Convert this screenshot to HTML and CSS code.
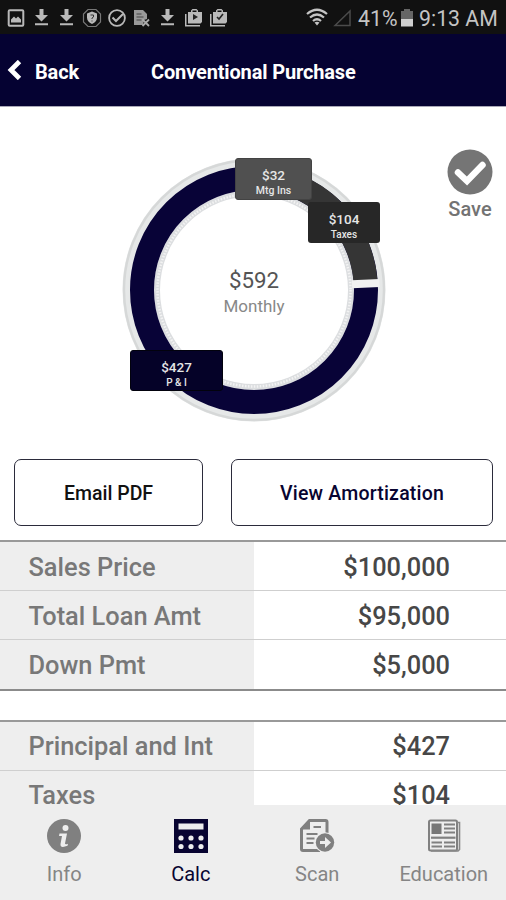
FILE: index.html
```html
<!DOCTYPE html>
<html lang="en">
<head>
<meta charset="utf-8">
<title>Conventional Purchase</title>
<link rel="stylesheet" href="styles.css">
</head>
<body>
<div class="app">
  <div class="status">
    <svg class="status-icons" width="232" height="34" viewBox="0 0 232 34">
      <defs>
        <g id="download"><path d="M4 0h4v6h4.500L6 12.500-.5 6H4zM-.5 14.300h13v2h-13z"/></g>
        <path id="bag" d="M3 3h3V1.500L7.500 0h4L13 1.500V3h4v10l-1.500 1.500H3zM7.500 3h4V1.500h-4zM0 5h1.500v11H15v1.500H0z" fill-rule="evenodd"/>
      </defs>
      <g fill="#b9b9b9">
        <rect x="8.700" y="10.200" width="14.600" height="15.600" rx="1" fill="none" stroke="#b9b9b9" stroke-width="2"/>
        <path d="M11 22.500v-3l3-3 2 2 2-2 3 3v3z"/>
        <use href="#download" x="35.500" y="9"/>
        <use href="#download" x="60.500" y="9"/>
        <path d="M88 9.500h8l4.500 4.500v8l-4.500 4.500h-8L83.500 22v-8z" fill="none" stroke="#777" stroke-width="1.200"/>
        <path d="M92 11.500l5 2v4q0 4-5 6.500-5-2.500-5-6.500v-4z"/>
        <path d="M90.500 15h3v2l-1.500 1v1M92 20.500v1" stroke="#333" fill="none"/>
        <circle cx="117" cy="18" r="7.900" fill="none" stroke="#b9b9b9" stroke-width="1.800"/>
        <path d="M112.500 17.500l3.500 3.500 7-7" fill="none" stroke="#b9b9b9" stroke-width="2"/>
        <path d="M134 10h9l4 4v5l-3 1-1 5h-9z" fill="#999"/>
        <path d="M136.500 14h5M136.500 17h7M136.500 20h5" stroke="#444" stroke-width="1.200"/>
        <path d="M142.500 19.500l6.500 6.500M149 19.500l-6.500 6.500" stroke="#aaa" stroke-width="1.800"/>
        <use href="#download" x="161.500" y="9"/>
        <use href="#bag" x="185" y="9"/>
        <path d="M193 14v6l5-3z" fill="#222"/>
        <use href="#bag" x="210" y="9"/>
        <path d="M217 17l2 2 4-5" stroke="#222" stroke-width="1.600" fill="none"/>
      </g>
    </svg>
    <div class="status-right">
      <svg width="46" height="34" viewBox="0 0 46 34">
        <g fill="none" stroke="#c4c4c4" stroke-width="2.200">
          <path d="M1 14Q11 5.500 21 14M4 17.500Q11 11.500 18 17.500M7 21Q11 17.500 15 21"/>
        </g>
        <path d="M11 25.500L8.500 22.500Q11 21 13.500 22.500z" fill="#c4c4c4"/>
        <path d="M29 25.500L44 11v14.500z" fill="none" stroke="#4b4b4b" stroke-width="1.500"/>
      </svg>
      <span class="pct">41%</span>
      <svg width="12" height="34" viewBox="0 0 12 34"><path d="M0 11h3V9h6v2h3v9H0z" fill="#666"/><path d="M0 19h12v7.500H0z" fill="#d0d0d0"/></svg>
      <span class="clock">9:13 AM</span>
    </div>
  </div>
  <header class="header">
    <div class="back">
      <svg width="15" height="20" viewBox="0 0 15 20"><path d="M12.500 1.500L4 10l8.500 8.500" fill="none" stroke="#fff" stroke-width="4.800"/></svg>
      <span>Back</span>
    </div>
    <h1>Conventional Purchase</h1>
  </header>
  <main class="content">
    <section class="summary">
      <div class="chart">
        <svg width="264" height="264" viewBox="-132 -132 264 264">
          <circle r="127.500" fill="none" stroke="#e6e8e8" stroke-width="8"/>
          <circle r="130" fill="none" stroke="#d6d8d8" stroke-width="2.400"/>
          <circle r="97" fill="none" stroke="#dcdee0" stroke-width="6"/>
          <circle r="96.500" fill="none" stroke="#f3f3f3" stroke-width="2.500" stroke-dasharray="1.500 1.500"/>
          <circle r="112" fill="none" stroke="#080337" stroke-width="24"/>
          <path d="M29 -108.200A112 112 0 0 1 111.600 -8" fill="none" stroke="#353535" stroke-width="24"/>
          <path d="M98 -5.800L125.500 -7" stroke="#f1f1f1" stroke-width="8" fill="none"/>
        </svg>
        <div class="total"><strong>$592</strong><span>Monthly</span></div>
        <div class="tip tip-ins"><b>$32</b><span>Mtg Ins</span></div>
        <div class="tip tip-tax"><b>$104</b><span>Taxes</span></div>
        <div class="tip tip-pi"><b>$427</b><span>P &amp; I</span></div>
      </div>
      <div class="save">
        <svg width="46" height="46" viewBox="0 0 46 46"><circle cx="23" cy="23" r="22.500" fill="#757575"/><path d="M11 23.500l9 8.500L35.500 16" fill="none" stroke="#fff" stroke-width="6.500" stroke-linecap="round"/></svg>
        <span>Save</span>
      </div>
    </section>
    <div class="actions">
      <div class="button email">Email PDF</div>
      <div class="button amort">View Amortization</div>
    </div>
    <div class="table first">
      <div class="row"><div class="label">Sales Price</div><div class="value">$100,000</div></div>
      <div class="row"><div class="label">Total Loan Amt</div><div class="value">$95,000</div></div>
      <div class="row"><div class="label">Down Pmt</div><div class="value">$5,000</div></div>
    </div>
    <div class="table second">
      <div class="row"><div class="label">Principal and Int</div><div class="value">$427</div></div>
      <div class="row"><div class="label">Taxes</div><div class="value">$104</div></div>
    </div>
  </main>
  <nav class="tabs">
    <div class="tab">
      <svg width="36" height="36" viewBox="0 0 36 36"><circle cx="18" cy="18" r="17" fill="#808080"/><circle cx="19.500" cy="10" r="3" fill="#eee"/><path d="M13.500 15.500h7.500l-2 10q0 1.500 3 .3l-.5 2q-7.500 3-7-1.800l1.500-8h-3z" fill="#eee"/></svg>
      <span>Info</span>
    </div>
    <div class="tab active">
      <svg width="36" height="36" viewBox="0 0 36 36"><path d="M1 1h34v34H1z" fill="#080431"/><g fill="#eee"><path d="M5.500 5.500h25v6h-25z"/><circle cx="8" cy="20" r="2.600"/><circle cx="18" cy="20" r="2.600"/><circle cx="28" cy="20" r="2.600"/><circle cx="8" cy="28.500" r="2.600"/><circle cx="18" cy="28.500" r="2.600"/><circle cx="28" cy="28.500" r="2.600"/></g></svg>
      <span>Calc</span>
    </div>
    <div class="tab">
      <svg width="36" height="36" viewBox="0 0 36 36"><path d="M28 15V4q0-1.500-1.500-1.500h-16L2.500 11v20q0 1.500 1.500 1.500h17" fill="none" stroke="#808080" stroke-width="3"/><path d="M11 2v9.500H2z" fill="#808080"/><path d="M14.500 9h7.500M7.500 16h11M7.500 20.500h8M7.500 25h7" stroke="#808080" stroke-width="2"/><circle cx="26" cy="24.500" r="10.300" fill="#eee"/><circle cx="26" cy="24.500" r="9.200" fill="#808080"/><path d="M21 23h5v-4l6 5.500-6 5.500v-4h-5z" fill="#eee"/></svg>
      <span>Scan</span>
    </div>
    <div class="tab">
      <svg width="36" height="36" viewBox="0 0 36 36"><rect x="3" y="2.500" width="28" height="30" rx="1.500" fill="none" stroke="#808080" stroke-width="2"/><path d="M31 4.500h2.500v27L32 33H5" fill="none" stroke="#888" stroke-width="1.600"/><path d="M5.500 5.500h10v10.500h-10z" fill="#777"/><path d="M18 6.500h11M18 10.500h11M18 14.500h11M5.500 24.500h10.500M18 24.500h11M5.500 28.500h10.500M18 28.500h11" stroke="#808080" stroke-width="1.800"/><path d="M5 19.700h24.500" stroke="#808080" stroke-width="2.200"/></svg>
      <span>Education</span>
    </div>
  </nav>
</div>
</body>
</html>
```
FILE: styles.css
```css
* { box-sizing: border-box; }
body { margin: 0; background: #fff; font-family: Roboto, sans-serif; }
svg { display: block; flex: none; }
.app { width: 506px; height: 900px; display: flex; flex-direction: column; overflow: hidden; }
.status { height: 34px; flex: none; background: #111; display: flex; justify-content: space-between; }
.status-right { display: flex; padding-right: 8px; color: #c4c4c4; font-size: 21.300px; line-height: 38px; white-space: nowrap; }
.pct { width: 42px; margin-left: 6px; }
.status-right .pct + svg { margin-left: 1px; }
.clock { width: 79px; margin-left: 6px; }
.header { height: 73px; flex: none; background: #050232; border-bottom: 1px solid #aaa8b8; color: #fff; display: flex; align-items: center; font-weight: 700; }
.back { display: flex; align-items: center; width: 151px; padding-left: 7px; gap: 13px; font-size: 20px; letter-spacing: -.15px; }
.back span, .header h1 { padding-top: 3px; }
.header h1 { margin: 0; font-size: 20px; font-weight: 700; letter-spacing: -.15px; white-space: nowrap; }
.content { flex: 1; min-height: 0; overflow: hidden; }
.summary { height: 352px; padding: 42px 13px 0 122px; display: flex; justify-content: space-between; align-items: flex-start; }
.chart { position: relative; width: 264px; height: 264px; margin-top: 9px; }
.total { position: absolute; inset: 0; display: flex; flex-direction: column; align-items: center; padding-top: 108px; }
.total strong { font-size: 22.300px; line-height: 28px; font-weight: 400; color: #555; }
.total span { font-size: 17px; line-height: 24px; color: #888; }
.tip { position: absolute; height: 41px; border-radius: 3px; color: #e6e6e6; display: flex; flex-direction: column; align-items: center; padding-top: 9px; }
.tip b { font-size: 13.500px; line-height: 16px; font-weight: 500; }
.tip span { font-size: 10px; line-height: 15px; font-weight: 500; }
.tip-ins { left: 113px; top: 0; width: 77px; height: 42px; background: #505050; border: 1px solid #434343; padding-top: 8px; }
.tip-ins span { font-size: 10.500px; }
.tip-tax { left: 186px; top: 44px; width: 72px; background: #272727; }
.tip-pi { left: 8px; top: 192px; width: 93px; background: #050228; border: 1px solid #02020d; padding-top: 8px; }
.save { width: 46px; display: flex; flex-direction: column; align-items: center; color: #737373; font-size: 20px; line-height: 26px; font-weight: 500; }
.save span { margin-top: 1px; }
.actions { display: flex; gap: 28px; height: 81px; padding: 0 13px 14px 14px; }
.button { border: 1.500px solid #2b2b3b; border-radius: 7px; display: flex; align-items: center; justify-content: center; padding-top: 2px; font-size: 19.500px; font-weight: 500; color: #080431; white-space: nowrap; }
.email { width: 189px; color: #111; }
.amort { width: 262px; letter-spacing: .2px; }
.table { border-top: 2px solid #999; background: #fff; }
.first { height: 151px; border-bottom: 2px solid #8b8b8b; }
.second { margin-top: 29px; }
.row { display: flex; height: 48px; font-size: 25.400px; line-height: 50px; font-weight: 500; }
.row + .row { border-top: 1px solid #cfcfcf; height: 49px; line-height: 51px; }
.first .row:last-child { height: 50px; }
.second .row { line-height: 48px; }
.second .row + .row { line-height: 49px; }
.label { width: 253.500px; padding-left: 28.500px; background: #eee; color: #787878; white-space: nowrap; }
.value { flex: 1; padding-right: 56px; text-align: right; color: #474747; }
.tabs { height: 95px; flex: none; background: #eee; display: grid; grid-template-columns: repeat(4, 126.500px); padding-left: 1px; }
.tab { display: flex; flex-direction: column; align-items: center; padding-top: 13px; color: #858585; font-size: 20px; line-height: 28px; }
.tab span { margin-top: 6px; }
.active { color: #080431; }
```
